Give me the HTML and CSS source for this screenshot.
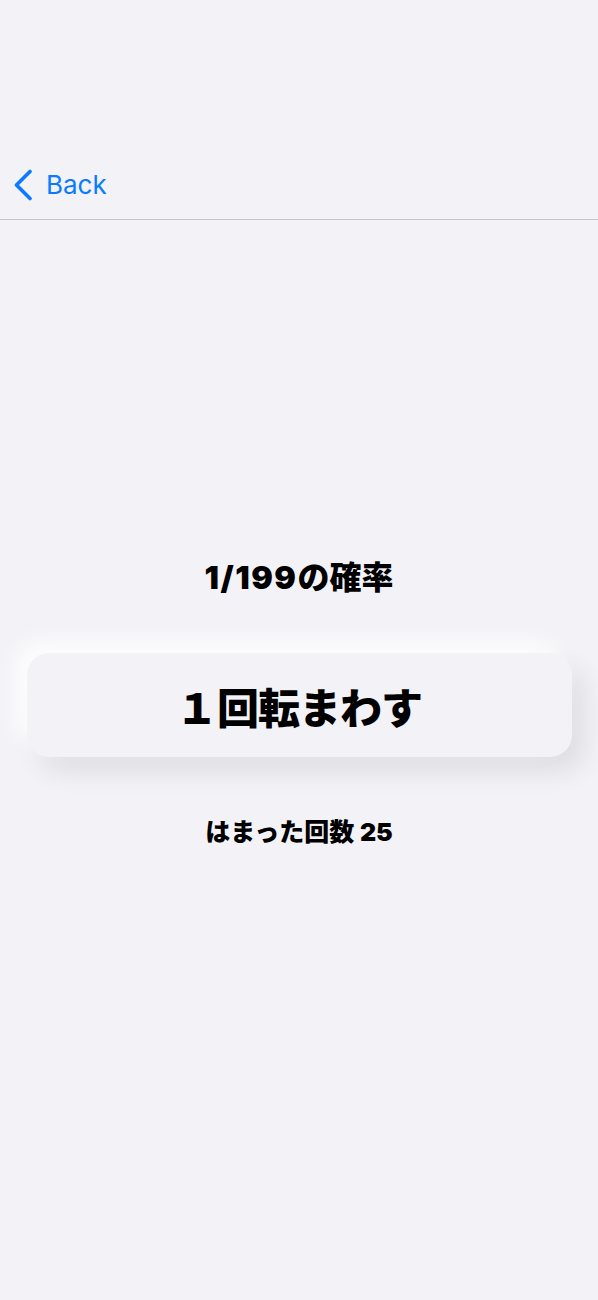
FILE: index.html
```html
<!DOCTYPE html>
<html lang="ja">
<head>
<meta charset="utf-8">
<title>1/199</title>
<link rel="stylesheet" href="styles.css">
</head>
<body>
<header class="top">
  <nav class="navbar">
    <a class="back" href="#">
      <svg class="chev" width="22" height="32" viewBox="0 0 22 32" aria-hidden="true">
        <path d="M17 2.5 L3.5 16 L17 29.5" fill="none" stroke="#0a7aff" stroke-width="3.6" stroke-linecap="round" stroke-linejoin="round"/>
      </svg>
      <span>Back</span>
    </a>
  </nav>
</header>
<main class="content">
  <h1 class="odds"><span class="num">1/199</span>の確率</h1>
  <button class="spin">１回転まわす</button>
  <p class="count">はまった回数 <span class="num">25</span></p>
</main>
</body>
</html>
```

FILE: styles.css
```css
html, body {
  margin: 0;
  padding: 0;
  background: #f2f2f7;
}
body {
  width: 598px;
  min-height: 1300px;
  font-family: "Noto Sans CJK JP", "Noto Sans", sans-serif;
  color: #000;
}
.top {
  padding-top: 150px;
}
.navbar {
  height: 70px;
  border-bottom: 1px solid #c6c6c8;
  display: flex;
  align-items: center;
  padding-left: 13px;
  box-sizing: border-box;
}
.back {
  display: flex;
  align-items: center;
  gap: 11px;
  text-decoration: none;
  color: #0a7aff;
  font-family: Inter, "Liberation Sans", sans-serif;
  font-size: 26px;
  line-height: 32px;
}
.chev {
  display: block;
}
.content {
  display: flex;
  flex-direction: column;
  align-items: center;
  padding-top: 337px;
}
.num {
  font-family: Inter, "Liberation Sans", sans-serif;
  font-weight: 900;
}
.odds {
  margin: 0;
  font-size: 32px;
  font-weight: 900;
  line-height: 36px;
}
.odds .num {
  letter-spacing: 1.5px;
}
.spin {
  margin-top: 57px;
  width: 545px;
  height: 104px;
  border: none;
  border-radius: 22px;
  background: #f2f2f7;
  box-shadow: -12px -12px 26px rgba(255, 255, 255, 0.9), 12px 14px 28px rgba(0, 0, 0, 0.09);
  font-family: "Noto Sans CJK JP", "Noto Sans", sans-serif;
  font-size: 42px;
  font-weight: 900;
  color: #000;
  letter-spacing: -1px;
  padding: 0;
}
.count {
  margin: 55px 0 0;
  font-size: 25px;
  font-weight: 900;
  line-height: 36px;
}
```
